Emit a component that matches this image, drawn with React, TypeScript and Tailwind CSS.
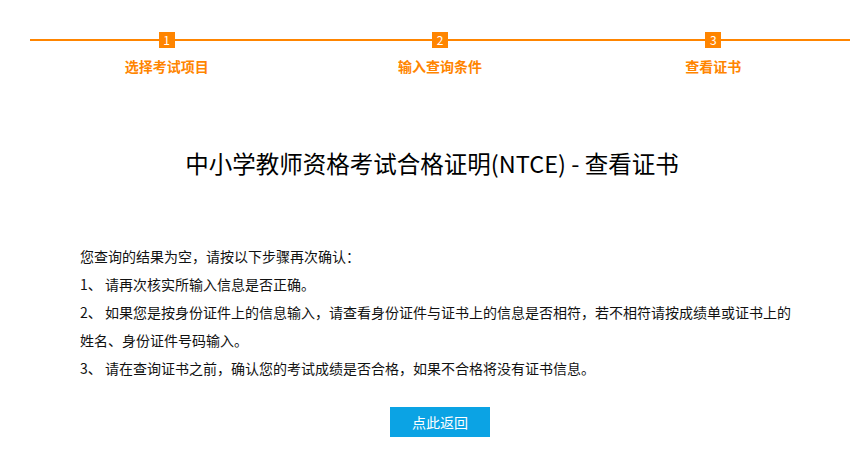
const steps = ['选择考试项目', '输入查询条件', '查看证书']

const notes = [
  '您查询的结果为空，请按以下步骤再次确认：',
  '1、 请再次核实所输入信息是否正确。',
  '2、 如果您是按身份证件上的信息输入，请查看身份证件与证书上的信息是否相符，若不相符请按成绩单或证书上的姓名、身份证件号码输入。',
  '3、 请在查询证书之前，确认您的考试成绩是否合格，如果不合格将没有证书信息。',
]

export default function App() {
  return (
    <div
      className="w-[861px] h-[451px] bg-white text-[#111] overflow-hidden"
      style={{ fontFamily: '"Microsoft YaHei", "Noto Sans CJK SC", sans-serif' }}
    >
      <div className="ml-[30px] w-[820px] pt-[32px]">
        {/* Steps */}
        <div className="relative grid grid-cols-3">
          <div className="absolute left-0 right-0 top-[7px] h-[2px] bg-[#ff8500]" />
          {steps.map((s, i) => (
            <div key={s} className="relative flex flex-col items-center">
              <div className="w-4 h-4 bg-[#ff8500] text-white text-[12px] leading-4 text-center">
                {i + 1}
              </div>
              <div className="mt-[8px] text-[14px] leading-[20px] font-bold text-[#ff8500]">{s}</div>
            </div>
          ))}
        </div>

        {/* Title */}
        <h1 className="mt-[71px] pr-[16px] text-center text-[23.5px] leading-[32px] text-black">
          中小学教师资格考试合格证明(NTCE) - 查看证书
        </h1>

        {/* Notes */}
        <div className="mt-[63px] px-[50px] text-[14px] leading-[28px]">
          {notes.map((n) => (
            <p key={n}>{n}</p>
          ))}
        </div>

        <div className="mt-[25px] flex justify-center">
          <button className="w-[100px] h-[30px] bg-[#0ba3e4] text-white text-[14px]">点此返回</button>
        </div>
      </div>
    </div>
  )
}
